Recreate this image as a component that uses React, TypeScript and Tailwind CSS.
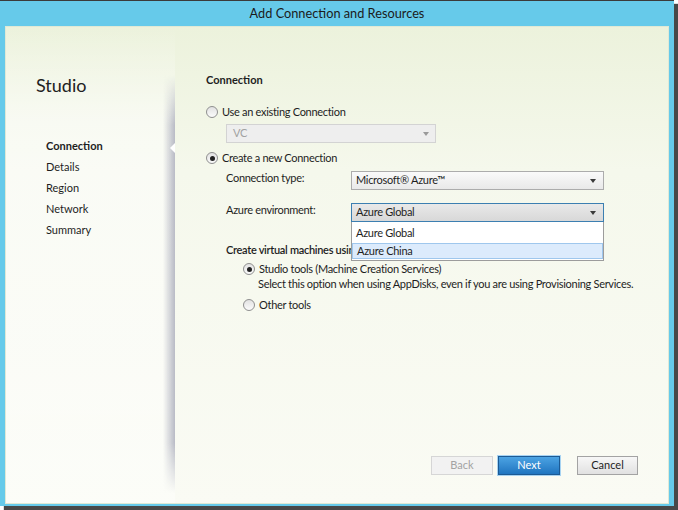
import React from 'react';

const font = "font-['Segoe_UI','Lato','Open_Sans',sans-serif]";

const Radio = ({ checked }: { checked?: boolean }) => (
  <span className="w-[12px] h-[12px] rounded-full border border-[#8f8f8f] bg-gradient-to-b from-[#e2e2e2] to-[#fbfbfb] flex items-center justify-center shrink-0">
    {checked && <span className="w-[5px] h-[5px] rounded-full bg-[#222]" />}
  </span>
);

const Arrow = ({ muted }: { muted?: boolean }) => (
  <span
    className={`w-0 h-0 border-x-[3.5px] border-x-transparent border-t-[4px] ${
      muted ? 'border-t-[#9a9a9a]' : 'border-t-[#3a3a3a]'
    }`}
  />
);

const steps = ['Connection', 'Details', 'Region', 'Network', 'Summary'];

export default function App() {
  return (
    <div className={`w-[678px] h-[510px] bg-white overflow-hidden ${font} text-[11px] tracking-[-0.3px] text-[#1e1e1e]`}>
      <div className="w-[674px] h-[506px] flex flex-col bg-[#66caea] border-t border-[#3b3b3b] shadow-[4px_4px_1px_rgba(40,40,40,0.85)]">
        {/* title bar */}
        <div className="h-[25px] flex items-center justify-center text-[12.75px] tracking-normal text-[#1b1b1b]">
          Add Connection and Resources
        </div>

        <div className="flex-1 mx-[5px] mb-[2px] mt-0 border border-[#dfe9d6] bg-gradient-to-b from-[#ecf2dc] via-[#f5f8ec] via-30% to-[#fafbf4] flex">
          {/* sidebar */}
          <div className="relative w-[169px] shrink-0 bg-gradient-to-b from-transparent via-white/50 via-20% to-white/40">
            <div className="pl-[30px] pt-[48px] text-[18px] tracking-normal leading-[20px] text-[#222]">Studio</div>
            <div className="pl-[40px] pt-[41px] flex flex-col tracking-normal">
              {steps.map((s, i) => (
                <div key={s} className={`h-[21px] flex items-center ${i === 0 ? 'font-bold' : ''}`}>
                  {s}
                </div>
              ))}
            </div>
            <div className="absolute right-0 top-[48px] bottom-[10px] w-[12px] bg-gradient-to-r from-transparent to-[#b8bac5] [mask-image:linear-gradient(to_bottom,transparent,black_12%,black_88%,transparent)]" />
            <div className="absolute right-0 top-[116px] w-0 h-0 border-y-[5px] border-y-transparent border-r-[5px] border-r-white" />
          </div>

          {/* main */}
          <div className="flex-1 min-w-0 flex flex-col pl-[31px] pr-[30px]">
            <div className="mt-[46px] h-[14px] leading-[14px] font-bold tracking-normal">Connection</div>

            <div className="mt-[17px] h-[16px] flex items-center gap-[4px]">
              <Radio />
              <span>Use an existing Connection</span>
            </div>
            <div className="ml-[20px] mt-[4px] w-[210px] h-[19px] border border-[#d3d3d3] bg-[#eeeeee] flex items-center justify-between px-[6px] text-[#a2a2a2]">
              <span>VC</span>
              <Arrow muted />
            </div>

            <div className="mt-[7px] h-[16px] flex items-center gap-[4px]">
              <Radio checked />
              <span>Create a new Connection</span>
            </div>

            <div className="ml-[20px] mt-[5px] flex items-center">
              <span className="w-[125px] -mt-[4px]">Connection type:</span>
              <div className="w-[253px] h-[19px] border border-[#acacac] bg-gradient-to-b from-[#fafafa] to-[#e9e9e9] flex items-center justify-between pl-[4px] pr-[7px]">
                <span>Microsoft® Azure™</span>
                <Arrow />
              </div>
            </div>

            <div className="ml-[20px] mt-[13px] flex items-center">
              <span className="w-[125px] -mt-[4px]">Azure environment:</span>
              <div className="relative w-[253px] h-[19px]">
                <div className="h-full border border-[#3c7fb1] bg-gradient-to-b from-[#e9e9e9] to-[#d8d8d8] flex items-center justify-between pl-[4px] pr-[7px]">
                  <span>Azure Global</span>
                  <Arrow />
                </div>
                <div className="absolute z-10 left-0 top-full w-full h-[39px] border border-[#9c9c9c] border-t-0 bg-white flex flex-col">
                  <div className="h-[21px] flex items-center pl-[4px] pt-[2px]">Azure Global</div>
                  <div className="h-[16px] flex items-center pl-[4px] bg-[#dcebfc] border border-[#9fc7ed]">Azure China</div>
                </div>
              </div>
            </div>

            <div className="ml-[20px] mt-[21px] h-[14px] leading-[14px] font-semibold">
              Create virtual machines using:
            </div>

            <div className="ml-[37px] mt-[4px] h-[16px] flex items-center gap-[4px]">
              <Radio checked />
              <span>Studio tools (Machine Creation Services)</span>
            </div>
            <div className="ml-[52px] h-[14px] leading-[14px] whitespace-nowrap">
              Select this option when using AppDisks, even if you are using Provisioning Services.
            </div>
            <div className="ml-[37px] mt-[6px] h-[16px] flex items-center gap-[4px]">
              <Radio />
              <span>Other tools</span>
            </div>

            <div className="mt-auto mb-[28px] flex justify-end items-center tracking-normal">
              <button className="w-[62px] h-[19px] border border-[#d6d6d6] bg-[#f2f2f2] text-[#a3a3a3]">Back</button>
              <button className="ml-[5px] w-[62px] h-[19px] border border-[#1c5a94] bg-gradient-to-b from-[#4ba3e3] to-[#1f75c0] text-white shadow-[0_0_0_1px_#a7d3f2]">
                Next
              </button>
              <button className="ml-[17px] w-[61px] h-[19px] border border-[#a3a3a3] bg-gradient-to-b from-[#f7f7f7] to-[#e1e1e1] text-[#1e1e1e]">
                Cancel
              </button>
            </div>
          </div>
        </div>
      </div>
    </div>
  );
}
